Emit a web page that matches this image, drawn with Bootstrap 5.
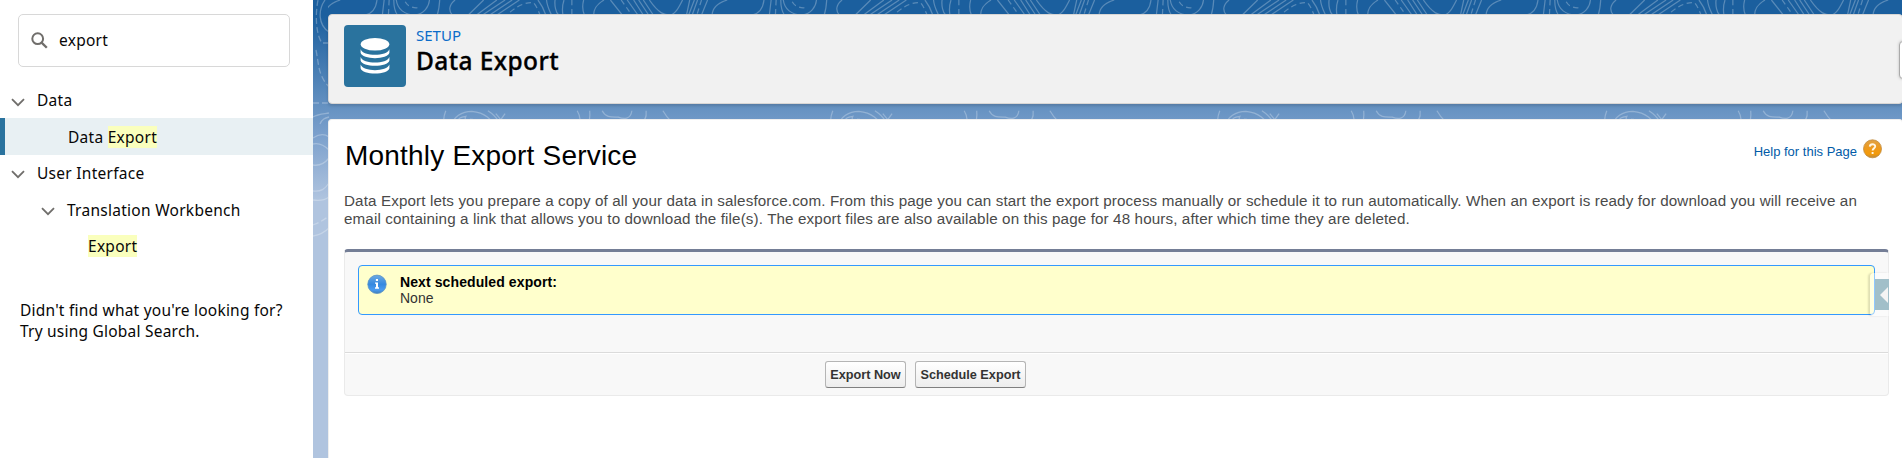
<!DOCTYPE html>
<html lang="en">
<head>
<meta charset="utf-8">
<meta name="viewport" content="width=device-width, initial-scale=1">
<title>Data Export</title>
<link href="https://cdn.jsdelivr.net/npm/bootstrap@5.3.0/dist/css/bootstrap.min.css" rel="stylesheet">
<style>
body{font-family:"Noto Sans","Open Sans",sans-serif;color:#080707;background:#fff;font-size:15.5px}
.side{width:313px;background:#fff;letter-spacing:.27px}
.search-box{height:53px;margin:14px 23px 0 18px;border:1px solid #d8d8d8;border-radius:5px;padding:0 0 0 12px}
.tree-list{margin-top:14px}
.tree-row{height:36.5px;line-height:37px;padding-left:11px}
.tree-row:first-child{height:37px;padding-top:2px}
.tree-row svg{width:14px;height:9px;margin:3px 12px 0 0;flex:none}
.tree-row.sub{padding:1px 0 0 41px}
.tree-row.picked{height:37px;line-height:38px;background:#e8f0f3;border-left:5px solid #2a739e;padding-left:63px}
.tree-row.leaf{padding-left:88px}
.hit{background:#faffbd;line-height:21px}
.hint{margin:35px 0 0 20px;line-height:21px;letter-spacing:.22px}
.stage{background:linear-gradient(#1b5f9e 0,#1b5f9e 16px,#6692c2 108px,#7ba0cc 135px,#b0c4df 200px,#b0c4df 100%)}
.topo{inset:0}
.sheet{margin-left:15px;margin-right:-1px;border-radius:4px}
.page-head{margin-top:14px;height:90px;background:#f1f1f1;border:1px solid #d8d6d4;box-shadow:0 2px 3px rgba(0,0,0,.14);padding:10px 0 0 15px}
.head-icon{width:62px;height:62px;border-radius:4px;background:#2a739e}
.eyebrow{color:#0b6cc9;font-size:15px;line-height:20px}
.page-title{font-size:24.5px;font-weight:500;line-height:30px;margin:1px 0 0;letter-spacing:.4px;color:#000;-webkit-text-stroke:.3px #000}
.edge-btn{right:-3px;top:26px;width:6px;height:38px;background:#fff;border:1px solid #aaa;border-radius:4px 0 0 4px;box-shadow:0 0 3px #bbb}
.arial{font-family:"Liberation Sans",Arial,sans-serif}
.body-sheet{margin-top:15px;background:#fff;padding:18px 14px 0 15px;border:1px solid #eee;border-bottom:0;border-radius:4px 4px 0 0}
.svc-title{font-size:28px;line-height:36px;margin:0;padding-left:1px;color:#000;letter-spacing:.2px}
.help-link{font-size:13px;color:#015ba7;text-decoration:none;margin-right:6px;padding-top:4px}
.intro{font-size:15.2px;letter-spacing:.124px;line-height:18px;color:#4a4a4a;margin:18px 0 0;white-space:nowrap}
.panel{margin-top:21px;width:1545px;height:147px;background:#f8f8f8;border:1px solid #eaeaea;border-top:3px solid #747e96;border-radius:4px}
.notice{height:50px;margin:13px 13px 0 13px;background:#ffc;border:1px solid #39f;border-radius:4px;padding:8px 0 0 8px;font-size:14px;line-height:16px;color:#333}
.notice b{color:#000;letter-spacing:.1px}
.actions{margin-top:37px;border-top:1px solid #dbdbdb;box-shadow:inset 0 1px #fff;padding:8px 0 0 480px;gap:9px}
.sf-btn{height:27px;border:1px solid #b5b5b5;border-bottom-color:#7f7f7f;border-radius:3px;background:linear-gradient(#fff,#ededed);font:bold 12.7px/26px "Liberation Sans",Arial,sans-serif;color:#333;padding:0;text-align:center}
.pull{right:-1px;top:21px;width:19px;height:43px;background:rgba(255,255,255,.45);border-radius:4px 0 0 4px;padding:6px 0 0 5px;box-shadow:-2px 0 2px rgba(0,0,0,.13)}
.pull div{height:31px;width:14px;background:#a1bfc9}
</style>
</head>
<body class="overflow-hidden">
<div class="d-flex vh-100">
  <aside class="side flex-shrink-0">
    <div class="search-box d-flex align-items-center">
      <svg width="17" height="17" viewBox="0 0 17 17" fill="none" stroke="#706e6b" stroke-width="2"><circle cx="6.7" cy="6.7" r="5.4"/><path d="M10.6 10.6 15.8 15.8" stroke-width="2.3"/></svg>
      <span class="q" style="margin-left:11px">export</span>
    </div>
    <div class="tree-list">
      <div class="tree-row d-flex align-items-center"><svg viewBox="0 0 14 9" fill="none" stroke="#706e6b" stroke-width="1.8"><path d="M1 1.2 7 7.2 13 1.2"/></svg>Data</div>
      <div class="tree-row picked">Data <span class="hit">Export</span></div>
      <div class="tree-row d-flex align-items-center"><svg viewBox="0 0 14 9" fill="none" stroke="#706e6b" stroke-width="1.8"><path d="M1 1.2 7 7.2 13 1.2"/></svg>User Interface</div>
      <div class="tree-row sub d-flex align-items-center"><svg viewBox="0 0 14 9" fill="none" stroke="#706e6b" stroke-width="1.8"><path d="M1 1.2 7 7.2 13 1.2"/></svg>Translation Workbench</div>
      <div class="tree-row leaf"><span class="hit">Export</span></div>
    </div>
    <div class="hint">Didn't find what you're looking for?<br>Try using Global Search.</div>
  </aside>
  <main class="stage flex-grow-1 position-relative d-flex flex-column overflow-hidden">
    <svg class="topo position-absolute" width="1589" height="458" fill="none">
      <defs>
        <pattern id="contours" patternUnits="userSpaceOnUse" x="121" y="0" width="387" height="130">
          <g transform="scale(.35714) translate(-59 0)" fill="none" stroke="#fff" stroke-opacity=".27" stroke-width="3.4">
            <path d="M75 0C74 18 72 30 68 42M118 0C100 14 100 30 110 42M198 0 155 42M235 0 178 42M258 0 195 42M278 0 215 42M298 0 235 42M350 0C362 15 368 30 372 42M374 0C376 20 385 35 388 42M398 0C396 15 400 35 408 42M423 0C418 15 418 30 420 42M478 0C474 15 475 30 480 42M535 0C510 15 506 28 506 42M553 0 586 42M600 0 630 42M618 0 645 42M632 0 660 42M645 0 673 42M662 0C690 40 705 42 720 42 735 40 745 20 755 0M775 0 766 42M788 0 772 42M797 0 782 42M825 0 808 42M880 0C850 10 838 25 838 42M983 0C980 25 970 38 950 42M1003 0 998 42M1030 0C1030 20 1033 32 1040 42M1037 0C1040 25 1060 42 1090 42 1115 38 1128 20 1130 0"/>
            <path stroke-dasharray="15 10" d="M272 34C300 10 325 5 338 8 350 22 355 42 357 44M445 0V42M583 0 613 42M808 0 795 42M1017 0 1015 42M1062 5C1070 20 1090 25 1105 20 1115 10 1118 0M62 318 65 357M280 340C290 320 310 312 325 315 360 325 380 330 410 325V312M1030 312C1025 335 1010 350 985 357"/>
            <path d="M92 310C84 330 84 345 90 360M105 360C110 325 140 312 165 312 200 315 225 335 228 360M118 350C112 340 118 335 124 342 125 330 135 328 148 326 140 338 160 345 175 341L165 334C185 335 195 345 192 354M200 340C212 345 212 352 210 360M210 310C240 330 243 345 242 360M232 318 246 335 248 360M258 318 246 335M295 360C300 342 330 338 440 360M460 310C472 330 470 345 462 360M495 310C497 330 493 345 488 360M530 310C540 330 555 328 575 328 590 334 610 335 613 310M653 310C655 330 650 340 635 345 600 350 560 350 547 360M635 345C645 350 655 353 655 360M700 310C715 335 725 345 738 346 755 338 780 338 830 342 870 340 910 335 922 360M830 360C840 343 855 343 862 360"/>
          </g>
        </pattern>
      </defs>
      <rect x="15" width="1574" height="120" fill="url(#contours)"/>
      <g stroke="#fff" stroke-opacity=".27" stroke-width="1.3">
        <path d="M12 0C5 10 5 25 16 32M0 117C5 114 10 114 16 113M7 124C9 119 12 118 16 117M0 138C6 134 12 134 16 137M0 144C8 142 14 148 16 150M0 165C6 166 12 163 16 158M0 191C8 192 12 189 16 183M0 200C6 201 12 200 16 197M0 236C6 235 12 232 16 228"/>
        <path stroke-dasharray="6 3" d="M5 0C2 15 3 35 9 43L16 43M3 50C6 65 5 75 16 87M0 103H16M0 225C6 223 12 219 16 216"/>
      </g>
    </svg>
    <header class="sheet page-head position-relative d-flex flex-shrink-0">
      <div class="head-icon d-flex align-items-center justify-content-center flex-shrink-0">
        <svg width="30" height="36" viewBox="0 0 30 36" fill="#fff"><ellipse cx="15" cy="6.3" rx="14.3" ry="6.3"/><path id="disc" d="M.6 11.2C3 18.6 27 18.6 29.4 11.2V14.8C28 21.9 2 21.9.6 14.8Z"/><use href="#disc" y="7.7"/><use href="#disc" y="15.4"/></svg>
      </div>
      <div style="margin-left:10px">
        <div class="eyebrow">SETUP</div>
        <h1 class="page-title">Data Export</h1>
      </div>
      <div class="edge-btn position-absolute"></div>
    </header>
    <section class="sheet body-sheet arial flex-grow-1 position-relative">
      <div class="d-flex justify-content-between">
        <h2 class="svc-title">Monthly Export Service</h2>
        <div class="d-flex align-items-start" style="margin-right:6px">
          <a class="help-link" href="#">Help for this Page</a>
          <svg style="margin-top:1px" width="19" height="20" viewBox="0 0 19 20"><defs><linearGradient id="amber" x2="0" y2="1"><stop stop-color="#dfa247"/><stop offset=".45" stop-color="#ee9a1e"/><stop offset=".8" stop-color="#f39a08"/><stop offset="1" stop-color="#b98a45"/></linearGradient></defs><circle cx="9.5" cy="9.8" r="9" fill="url(#amber)" stroke="#c08a3c" stroke-width=".8"/><path d="M6.8 7.6C6.9 4.4 12.3 4.4 12.2 7.5 12.1 9.5 9.6 9.3 9.6 11.6M9.6 13V15" fill="none" stroke="#fff6e4" stroke-width="1.9"/></svg>
        </div>
      </div>
      <p class="intro">Data Export lets you prepare a copy of all your data in salesforce.com. From this page you can start the export process manually or schedule it to run automatically. When an export is ready for download you will receive an<br>email containing a link that allows you to download the file(s). The export files are also available on this page for 48 hours, after which time they are deleted.</p>
      <div class="panel position-relative">
        <div class="notice d-flex align-items-start">
          <svg width="20" height="21" viewBox="0 0 20 21" class="flex-shrink-0"><defs><linearGradient id="azure" x2="0" y2="1"><stop stop-color="#6daae2"/><stop offset=".5" stop-color="#3588e0"/><stop offset=".8" stop-color="#4a9bf0"/><stop offset="1" stop-color="#3f7db8"/></linearGradient></defs><circle cx="10" cy="10.3" r="9.2" fill="url(#azure)" stroke="#5a92c4" stroke-width=".8"/><path d="M8.9 5H11V7H8.9ZM8 8.5H11V13.3H12V14.7H8V13.3H9V9.8H8Z" fill="#fff"/></svg>
          <div style="margin-left:13px"><b>Next scheduled export:</b><br><span>None</span></div>
        </div>
        <div class="actions d-flex">
          <button class="sf-btn" style="width:81px">Export Now</button>
          <button class="sf-btn" style="width:111px">Schedule Export</button>
        </div>
        <div class="pull position-absolute"><div><svg class="d-block" width="14" height="31"><path d="M13 8V24L5 16Z" fill="#f4f4f4"/></svg></div></div>
      </div>
    </section>
  </main>
</div>
<script src="https://cdn.jsdelivr.net/npm/bootstrap@5.3.0/dist/js/bootstrap.bundle.min.js"></script>
</body>
</html>
